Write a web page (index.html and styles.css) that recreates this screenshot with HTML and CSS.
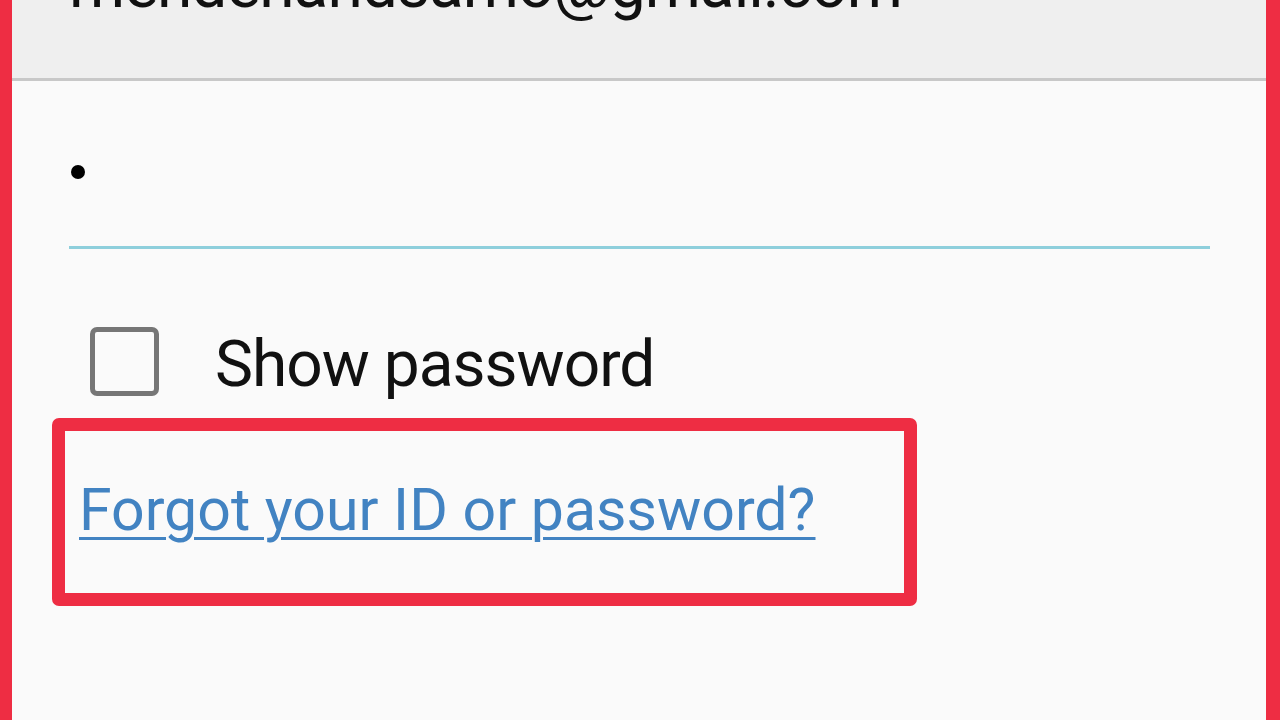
FILE: index.html
```html
<!DOCTYPE html>
<html>
<head>
<meta charset="utf-8">
<link rel="stylesheet" href="styles.css">
</head>
<body>
<div class="frame">
  <div class="email-field">
    <div class="email-text">mehdehandsamo@gmail.com</div>
  </div>
  <div class="password-field">
    <span class="bullet"></span>
  </div>
  <div class="show-row">
    <span class="checkbox"></span>
    <span class="show-label">Show password</span>
  </div>
  <div class="highlight">
    <a class="forgot" href="#">Forgot your ID or password?</a>
  </div>
</div>
</body>
</html>
```

FILE: styles.css
```css
html, body {
  margin: 0;
  padding: 0;
  background: #fafafa;
}
.frame {
  box-sizing: border-box;
  width: 1280px;
  height: 720px;
  overflow: hidden;
  border-left: 12px solid #ee2d43;
  border-right: 14px solid #ee2d43;
  background: #fafafa;
  font-family: Roboto, "Liberation Sans", sans-serif;
  display: flex;
  flex-direction: column;
}
.email-field {
  height: 78px;
  background: #efefef;
  border-bottom: 3px solid #c8c8c8;
  box-sizing: content-box;
  overflow: hidden;
}
.email-text {
  margin-top: -46px;
  margin-left: 57px;
  font-size: 64px;
  line-height: 64px;
  letter-spacing: -1px;
  color: #111;
}
.password-field {
  margin: 0 56px 0 57px;
  height: 168px;
  border-bottom: 3px solid #8ecfdc;
  box-sizing: border-box;
  display: flex;
  align-items: flex-start;
}
.bullet {
  width: 14px;
  height: 14px;
  border-radius: 50%;
  background: #000;
  margin-top: 84px;
  margin-left: 2px;
}
.show-row {
  display: flex;
  align-items: center;
  margin-top: 78px;
  margin-left: 78px;
  gap: 56px;
}
.checkbox {
  box-sizing: border-box;
  width: 69px;
  height: 69px;
  border: 5px solid #767676;
  border-radius: 7px;
}
.show-label {
  font-size: 64px;
  line-height: 69px;
  letter-spacing: -1px;
  color: #111;
  position: relative;
  top: 3px;
}
.highlight {
  box-sizing: border-box;
  margin-top: 22px;
  margin-left: 40px;
  width: 865px;
  height: 188px;
  border: 13px solid #ee2d43;
  border-radius: 7px;
  display: flex;
  align-items: center;
  padding-left: 14px;
}
.forgot {
  font-size: 59px;
  line-height: 70px;
  color: #4283c2;
  text-decoration: underline;
  text-decoration-thickness: 3px;
  text-underline-offset: 7px;
  margin-top: -4px;
}
```
